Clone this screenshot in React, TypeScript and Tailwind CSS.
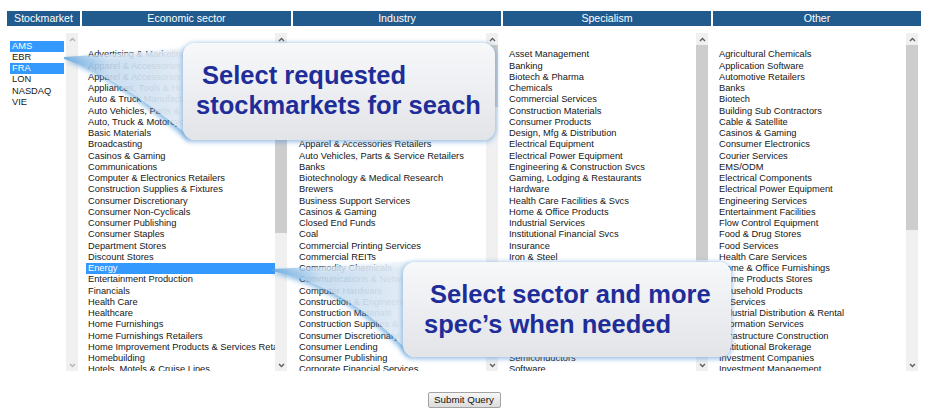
import React from 'react';

type Thumb = { height: number } | null;

interface ListBoxProps {
  items: string[];
  selected: string[];
  widthClass: string;
  thumb: Thumb;
  disabled?: boolean;
  padTop: string;
}

const economic = [
  '', 'Advertising & Marketing', 'Apparel & Accessories', 'Apparel & Accessories Retailers',
  'Appliances, Tools & Housewares', 'Auto & Truck Manufacturers', 'Auto Vehicles, Parts & Service Retailers',
  'Auto, Truck & Motorcycle Parts', 'Basic Materials', 'Broadcasting', 'Casinos & Gaming', 'Communications',
  'Computer & Electronics Retailers', 'Construction Supplies & Fixtures', 'Consumer Discretionary',
  'Consumer Non-Cyclicals', 'Consumer Publishing', 'Consumer Staples', 'Department Stores', 'Discount Stores',
  'Energy', 'Entertainment Production', 'Financials', 'Health Care', 'Healthcare', 'Home Furnishings',
  'Home Furnishings Retailers', 'Home Improvement Products & Services Retailers', 'Homebuilding',
  'Hotels, Motels & Cruise Lines', 'Household Products',
];

const industry = [
  '', 'Advertising & Marketing', 'Aerospace & Defense', 'Agricultural Chemicals', 'Air Freight & Logistics',
  'Airlines', 'Airport Services', 'Aluminum', 'Apparel & Accessories', 'Apparel & Accessories Retailers',
  'Auto Vehicles, Parts & Service Retailers', 'Banks', 'Biotechnology & Medical Research', 'Brewers',
  'Business Support Services', 'Casinos & Gaming', 'Closed End Funds', 'Coal', 'Commercial Printing Services',
  'Commercial REITs', 'Commodity Chemicals', 'Communications & Networking', 'Computer Hardware',
  'Construction & Engineering', 'Construction Materials', 'Construction Supplies & Fixtures',
  'Consumer Discretionary', 'Consumer Lending', 'Consumer Publishing', 'Corporate Financial Services',
  'Courier, Postal & Air Freight',
];

const specialism = [
  '', 'Asset Management', 'Banking', 'Biotech & Pharma', 'Chemicals', 'Commercial Services',
  'Construction Materials', 'Consumer Products', 'Design, Mfg & Distribution', 'Electrical Equipment',
  'Electrical Power Equipment', 'Engineering & Construction Svcs', 'Gaming, Lodging & Restaurants', 'Hardware',
  'Health Care Facilities & Svcs', 'Home & Office Products', 'Industrial Services', 'Institutional Financial Svcs',
  'Insurance', 'Iron & Steel', 'Leisure Facilities & Svcs', 'Machinery', 'Media', 'Medical Equipment & Devices',
  'Metals & Mining', 'Oil & Gas', 'Real Estate', 'Retail - Discretionary', 'Semiconductors', 'Software',
  'Specialty Finance',
];

const other = [
  '', 'Agricultural Chemicals', 'Application Software', 'Automotive Retailers', 'Banks', 'Biotech',
  'Building Sub Contractors', 'Cable & Satellite', 'Casinos & Gaming', 'Consumer Electronics', 'Courier Services',
  'EMS/ODM', 'Electrical Components', 'Electrical Power Equipment', 'Engineering Services',
  'Entertainment Facilities', 'Flow Control Equipment', 'Food & Drug Stores', 'Food Services',
  'Health Care Services', 'Home & Office Furnishings', 'Home Products Stores', 'Household Products',
  'IT Services', 'Industrial Distribution & Rental', 'Information Services', 'Infrastructure Construction',
  'Institutional Brokerage', 'Investment Companies', 'Investment Management', 'Leisure Products',
];

const Chevron: React.FC<{ up: boolean; muted?: boolean }> = ({ up, muted }) => (
  <svg width="7" height="5" viewBox="0 0 7 5">
    <polyline
      points={up ? '1,4 3.5,1.5 6,4' : '1,1 3.5,3.5 6,1'}
      fill="none"
      stroke={muted ? '#b4b4b4' : '#5f5f5f'}
      strokeWidth="1.4"
    />
  </svg>
);

const ListBox: React.FC<ListBoxProps> = ({ items, selected, widthClass, thumb, disabled, padTop }) => (
  <div className={`flex h-[338px] bg-white ${widthClass}`}>
    <div className={`flex-1 min-w-0 overflow-hidden pl-[1px] ${padTop}`}>
      {items.map((item, i) => {
        const on = selected.includes(item) && item !== '';
        return (
          <div
            key={i}
            className={`h-[11.25px] leading-[11.25px] text-[9.3px] whitespace-nowrap overflow-hidden pl-[2px] ${
              on ? 'bg-[#3399ff] text-white' : 'text-[#161616]'
            }`}
          >
            {item || '\u00a0'}
          </div>
        );
      })}
    </div>
    <div className="w-[12px] flex flex-col bg-[#f0f0f0]">
      <div className="h-[12px] flex items-center justify-center">
        <Chevron up muted={disabled} />
      </div>
      {thumb && <div className="bg-[#cdcdcd]" style={{ height: thumb.height }} />}
      <div className="flex-1" />
      <div className="h-[12px] flex items-center justify-center">
        <Chevron up={false} muted={disabled} />
      </div>
    </div>
  </div>
);

const Callout: React.FC<{ box: string; lines: string[]; pad: string }> = ({ box, lines, pad }) => (
  <div
    className={`absolute rounded-[12px] bg-linear-to-b from-[#f7f8fa] to-[#e2e4e8] shadow-[0_1px_5px_1px_rgba(70,140,210,0.55)] ${box} ${pad}`}
  >
    <div className="pl-[6px] text-[25.5px] leading-[30px] font-bold text-[#1f2d98] whitespace-nowrap">{lines[0]}</div>
    <div className="text-[25.5px] leading-[30px] font-bold text-[#1f2d98] whitespace-nowrap">{lines[1]}</div>
  </div>
);

const headers = [
  { label: 'Stockmarket', w: 'w-[73px]' },
  { label: 'Economic sector', w: 'w-[209px]' },
  { label: 'Industry', w: 'w-[208px]' },
  { label: 'Specialism', w: 'w-[208px]' },
  { label: 'Other', w: 'w-[208px]' },
];

const App: React.FC = () => {
  return (
    <div className="relative w-[938px] h-[419px] overflow-hidden bg-white font-['Liberation_Sans',Arial,sans-serif]">
      <div className="pl-[7px] pt-[11px] w-[921px]">
        <div className="flex gap-[2px]">
          {headers.map(h => (
            <div
              key={h.label}
              className={`${h.w} h-[15px] leading-[15px] bg-[#215a8c] text-white text-[10.6px] text-center`}
            >
              {h.label}
            </div>
          ))}
        </div>

        <div className="flex gap-[2px] mt-[7px]">
          <div className="w-[73px] pl-[2px]">
            <ListBox
              items={['AMS', 'EBR', 'FRA', 'LON', 'NASDAQ', 'VIE']}
              selected={['AMS', 'FRA']}
              widthClass="w-[69px] [&>div:first-child]:pr-[2px]"
              thumb={null}
              disabled
              padTop="pt-[7.5px]"
            />
          </div>
          <div className="w-[209px] pl-[3px]">
            <ListBox items={economic} selected={['Energy']} widthClass="w-[202px]" thumb={{ height: 188 }} padTop="pt-[5px]" />
          </div>
          <div className="w-[208px] pl-[3px]">
            <ListBox items={industry} selected={[]} widthClass="w-[202px]" thumb={{ height: 62 }} padTop="pt-[5px]" />
          </div>
          <div className="w-[208px] pl-[3px]">
            <ListBox items={specialism} selected={[]} widthClass="w-[202px]" thumb={{ height: 215 }} padTop="pt-[5px]" />
          </div>
          <div className="w-[208px] pl-[3px]">
            <ListBox items={other} selected={[]} widthClass="w-[202px]" thumb={{ height: 185 }} padTop="pt-[5px]" />
          </div>
        </div>

        <div className="flex justify-center mt-[21px]">
          <button className="w-[73px] h-[16px] border border-[#a3a3a3] rounded-[2px] bg-linear-to-b from-[#f7f7f7] to-[#dcdcdc] text-[9.8px] leading-[14px] text-[#111]">
            Submit Query
          </button>
        </div>
      </div>

      {/* callout pointers */}
      <svg className="absolute left-0 top-0 pointer-events-none" width="938" height="419">
        <defs>
          <linearGradient id="tailA" x1="0" y1="0" x2="1" y2="0">
            <stop offset="0" stopColor="#5aa0dc" stopOpacity="0.8" />
            <stop offset="0.35" stopColor="#e4edf7" stopOpacity="0.7" />
            <stop offset="1" stopColor="#f3f5f8" stopOpacity="0.85" />
          </linearGradient>
          <filter id="glow" x="-20%" y="-20%" width="140%" height="140%">
            <feGaussianBlur stdDeviation="2.5" />
          </filter>
        </defs>
        <path d="M64,58 L190,49 L190,140 Q115,76 64,58 Z" fill="#3f8fd4" opacity="0.6" filter="url(#glow)" transform="translate(0,2)" />
        <path d="M64,57 L190,49 L190,137 Q115,75 64,59 Z" fill="url(#tailA)" />
        <path d="M272,270 L410,263 L410,356 Q345,287 272,271 Z" fill="#3f8fd4" opacity="0.6" filter="url(#glow)" transform="translate(0,2)" />
        <path d="M272,269 L410,263 L410,353 Q345,285 272,271 Z" fill="url(#tailA)" />
      </svg>

      <Callout box="left-[183px] top-[43px] w-[312px] h-[97px]" pad="pl-[13px] pt-[17px]" lines={['Select requested', 'stockmarkets for seach']} />
      <Callout box="left-[403px] top-[262px] w-[328px] h-[95px]" pad="pl-[21px] pt-[17px]" lines={['Select sector and more', 'spec\u2019s when needed']} />
    </div>
  );
};

export default App;
